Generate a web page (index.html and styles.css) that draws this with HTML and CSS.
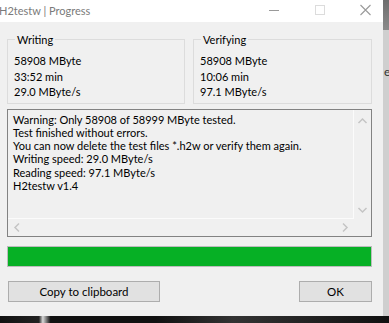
FILE: index.html
```html
<!DOCTYPE html>
<html>
<head>
<meta charset="utf-8">
<link rel="stylesheet" href="styles.css">
</head>
<body>
<div class="desktop">
  <div class="window">
    <div class="titlebar">
      <span class="title">H2testw | Progress</span>
      <div class="controls">
        <svg class="ctl" width="46" height="22" viewBox="0 0 46 22"><line x1="18" y1="10.5" x2="28" y2="10.5" stroke="#9a9a9a" stroke-width="1"/></svg>
        <svg class="ctl" width="46" height="22" viewBox="0 0 46 22"><rect x="18.5" y="5.5" width="9" height="9" fill="none" stroke="#dcdcdc" stroke-width="1"/></svg>
        <svg class="ctl" width="46" height="22" viewBox="0 0 46 22"><path d="M17.5 5 L27.5 15 M27.5 5 L17.5 15" stroke="#9a9a9a" stroke-width="1.1" fill="none"/></svg>
      </div>
    </div>
    <div class="content">
      <div class="groups">
        <fieldset class="group">
          <legend>Writing</legend>
          <div class="val">58908 MByte</div>
          <div class="val">33:52 min</div>
          <div class="val">29.0 MByte/s</div>
        </fieldset>
        <fieldset class="group">
          <legend>Verifying</legend>
          <div class="val">58908 MByte</div>
          <div class="val">10:06 min</div>
          <div class="val">97.1 MByte/s</div>
        </fieldset>
      </div>
      <div class="log">
        <div class="log-main">
          <div class="log-text">
            <div>Warning: Only 58908 of 58999 MByte tested.</div>
            <div>Test finished without errors.</div>
            <div>You can now delete the test files *.h2w or verify them again.</div>
            <div>Writing speed: 29.0 MByte/s</div>
            <div>Reading speed: 97.1 MByte/s</div>
            <div>H2testw v1.4</div>
          </div>
          <div class="vscroll">
            <svg width="17" height="12" viewBox="0 0 17 12"><path d="M4.5 8 L8.5 4 L12.5 8" stroke="#c4c4c4" stroke-width="1.5" fill="none"/></svg>
            <svg width="17" height="12" viewBox="0 0 17 12"><path d="M4.5 4 L8.5 8 L12.5 4" stroke="#c4c4c4" stroke-width="1.5" fill="none"/></svg>
          </div>
        </div>
        <div class="log-bottom">
          <div class="hscroll">
            <svg width="12" height="17" viewBox="0 0 12 17"><path d="M8 4.5 L4 8.5 L8 12.5" stroke="#c4c4c4" stroke-width="1.5" fill="none"/></svg>
            <svg width="12" height="17" viewBox="0 0 12 17"><path d="M4 4.5 L8 8.5 L4 12.5" stroke="#c4c4c4" stroke-width="1.5" fill="none"/></svg>
          </div>
          <div class="corner"></div>
        </div>
      </div>
      <div class="progress"><div class="fill" style="width:100%"></div></div>
      <div class="buttons">
        <button class="btn btn-copy">Copy to clipboard</button>
        <button class="btn btn-ok">OK</button>
      </div>
    </div>
  </div>
  <div class="behind">
    <div class="behind-top"></div>
    <div class="behind-body"><span class="behind-e">e</span></div>
  </div>
</div>
<div class="floor"></div>
</body>
</html>
```

FILE: styles.css
```css
html, body {
  margin: 0;
  padding: 0;
  background: #141414;
  width: 389px;
  height: 323px;
  overflow: hidden;
  font-family: Lato, "Noto Sans", sans-serif;
  font-size: 11px;
  color: #000;
}
.desktop {
  display: flex;
  height: 316px;
}
.window {
  width: 383px;
  background: #f0f0f0;
  display: flex;
  flex-direction: column;
}
.titlebar {
  height: 22px;
  background: #fff;
  display: flex;
  align-items: center;
  justify-content: space-between;
}
.title {
  color: #7a7a7a;
  font-size: 11px;
  margin-left: -1px;
  line-height: 22px;
}
.controls {
  display: flex;
  margin-right: -6px;
}
.ctl { display: block; }
.content {
  padding: 10px 11px 0 7px;
  display: flex;
  flex-direction: column;
}
.groups {
  display: flex;
  gap: 8px;
}
.group {
  margin: 0;
  border: 1px solid #dcdcdc;
  padding: 6px 6px 3px 6px;
  flex: 1;
  min-width: 0;
}
.group:last-child { flex: 0 0 auto; width: 165px; }
.group legend {
  padding: 0 2px;
  margin-left: 1px;
  line-height: 15px;
  color: #000;
}
.val {
  line-height: 15.5px;
}
.log {
  margin-top: 5px;
  height: 126px;
  border: 1px solid #828282;
  display: flex;
  flex-direction: column;
}
.log-main {
  flex: 1;
  display: flex;
  min-height: 0;
}
.log-text {
  flex: 1;
  padding: 3px 5px 2px 5px;
  line-height: 13.3px;
  border-right: 1px solid #fbfbfb;
  border-bottom: 1px solid #fbfbfb;
  white-space: nowrap;
  overflow: hidden;
}
.vscroll {
  width: 17px;
  display: flex;
  flex-direction: column;
  justify-content: space-between;
  padding: 5px 0 3px 0;
}
.vscroll svg, .hscroll svg { display: block; }
.log-bottom {
  height: 17px;
  display: flex;
}
.hscroll {
  flex: 1;
  display: flex;
  justify-content: space-between;
  padding: 0 3px 0 3px;
}
.corner { width: 17px; }
.progress {
  margin-top: 9px;
  height: 19px;
  border: 1px solid #bcbcbc;
  background: #e6e6e6;
}
.fill {
  height: 100%;
  background: #06b025;
}
.buttons {
  margin-top: 14px;
  display: flex;
  justify-content: space-between;
}
.btn {
  height: 21px;
  background: #e1e1e1;
  border: 1px solid #adadad;
  font-family: inherit;
  font-size: 11.5px;
  color: #000;
  padding: 0;
  margin: 0;
}
.btn-copy { width: 152px; margin-left: 1px; }
.btn-ok { width: 73px; }
.behind {
  width: 6px;
  display: flex;
  flex-direction: column;
}
.behind-top {
  height: 30px;
  background: linear-gradient(#6e6e6e, #8a8a8a);
}
.behind-body {
  flex: 1;
  background: #cfcfcf;
  overflow: hidden;
  position: relative;
}
.behind-e {
  position: absolute;
  left: 1px;
  top: 34px;
  font-size: 12px;
  color: #333;
}
.floor {
  height: 7px;
  background: linear-gradient(90deg, #111 0%, #222 10%, #d8d8d8 11%, #111 13%, #111 40%, #333 60%, #111 100%);
}
```
